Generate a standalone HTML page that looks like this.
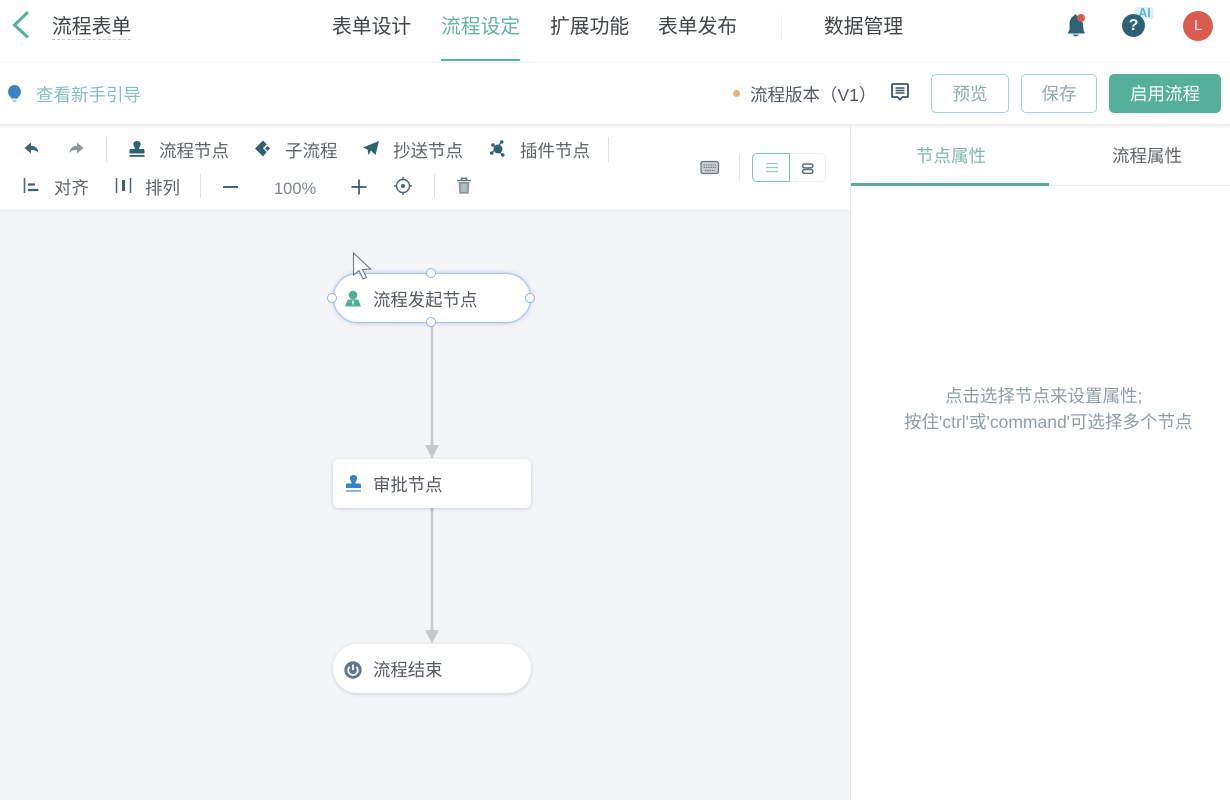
<!DOCTYPE html>
<html lang="zh"><head><meta charset="utf-8"><style>
html,body{margin:0;padding:0;background:#fff}
#p{position:relative;width:1230px;height:800px;overflow:hidden;background:#fff;font-family:"Liberation Sans","Noto Sans CJK SC",sans-serif;color:#555;filter:blur(.3px)}
.t{position:absolute;white-space:nowrap;line-height:26px;font-size:17.5px;color:#5f6469;margin-top:1px}
.n{font-size:19.8px;color:#3f4447}
.a{position:absolute}
svg{position:absolute;overflow:visible}
.v{position:absolute;width:1px;background:#dfe2e4}
.h{position:absolute;width:8px;height:8px;background:#fff;border:1.5px solid #8db4ea;border-radius:50%}
.node{position:absolute;left:333px;width:198px;height:49px;background:#fff;box-shadow:0 1px 4px rgba(40,60,80,.2)}
.btn{position:absolute;top:74px;height:39px;box-sizing:border-box;border:1.5px solid #a4d3d3;border-radius:5px;background:#fff;text-align:center;line-height:39px;font-size:17.5px;color:#8fa9ad}
</style></head><body><div id="p">

<!-- top bar -->
<div class="a" style="left:0;top:62px;width:1230px;height:1px;background:#f1f2f3"></div>
<svg style="left:0;top:0" width="40" height="50"><path d="M28 12 L14.500 25 L28 37.500" fill="none" stroke="#55b09c" stroke-width="3"/></svg>
<div class="t n" style="left:52px;top:13px">流程表单</div>
<div class="a" style="left:52px;top:39px;width:79px;border-top:1px dashed #c6c8ca"></div>
<div class="t n" style="left:332px;top:13px">表单设计</div>
<div class="t n" style="left:441px;top:13px;color:#63b5a3">流程设定</div>
<div class="a" style="left:441px;top:59px;width:79px;height:2px;background:#55b3a1"></div>
<div class="t n" style="left:550px;top:13px">扩展功能</div>
<div class="t n" style="left:658px;top:13px">表单发布</div>
<div class="v" style="left:781px;top:14px;height:25px;background:#eceeef"></div>
<div class="t n" style="left:824px;top:13px">数据管理</div>

<!-- bell -->
<svg style="left:1064px;top:13px" width="24" height="26"><path d="M11 1 L13.500 3 C17 4 19 8 19 12 L19.500 17 L21 20.500 L3.500 20.500 L5.500 17 L5.500 11 C5.500 7 7.500 4 9.500 3Z M9 21.500 C9.500 24 14 24 14.500 21.500Z" fill="#2f6175"/><circle cx="17" cy="5" r="4" fill="#dc5a4c"/></svg>
<!-- help -->
<div class="a" style="left:1135px;top:7px;width:19px;height:12px;background:#dff2fb;border-radius:2px;color:#64b0e8;font-size:12.500px;font-weight:bold;line-height:12px;text-align:center">AI</div>
<div class="a" style="left:1122px;top:14px;width:23px;height:23px;border-radius:50%;background:#2f6175;color:#f2f6f7;font-size:16px;font-weight:bold;line-height:23px;text-align:center">?</div>
<!-- avatar -->
<div class="a" style="left:1183px;top:11px;width:30px;height:30px;border-radius:50%;background:#dc5b50;color:#fff;font-size:14.500px;line-height:30px;text-align:center">L</div>

<!-- sub bar -->
<svg style="left:7px;top:84px" width="16" height="20"><path d="M7.500 1 A6.800 6.800 0 0 1 11.500 13 L10.500 14.500 L4.500 14.500 L3.500 13 A6.800 6.800 0 0 1 7.500 1Z" fill="#3a83c4"/><path d="M5 15.500 H10 L9 18 H6Z" fill="#b4cfe6"/></svg>
<div class="t" style="left:36px;top:81px;color:#83bfbe">查看新手引导</div>
<div class="a" style="left:733px;top:90px;width:7px;height:7px;border-radius:50%;background:#e3b677"></div>
<div class="t" style="left:750px;top:81px;color:#555a60">流程版本（V1）</div>
<svg style="left:890px;top:82px" width="20" height="20"><path d="M3 2 H17 Q18 2 18 3 V15 H12.500 L10 17.500 L7.500 15 H2 V3 Q2 2 3 2Z" fill="none" stroke="#3d5866" stroke-width="1.800" stroke-linejoin="round"/><path d="M5.500 6 H14.500 M5.500 8.500 H14.500 M5.500 11 H14.500" stroke="#3d5866" stroke-width="1.400"/></svg>
<div class="btn" style="left:931px;width:78px">预览</div>
<div class="btn" style="left:1021px;width:76px">保存</div>
<div class="btn" style="left:1109px;width:112px;background:#54b098;border-color:#54b098;color:#fff">启用流程</div>
<div class="a" style="left:0;top:124px;width:1230px;height:5px;background:linear-gradient(#e9eaeb,#fff)"></div>

<!-- canvas -->
<div class="a" style="left:0;top:211px;width:851px;height:589px;background:#f4f5f7"></div>
<div class="a" style="left:0;top:210px;width:851px;height:1px;background:#eceef0"></div>
<div class="a" style="left:850px;top:125px;width:1px;height:675px;background:#e5e7e9"></div>

<!-- toolbar row 1 -->
<svg style="left:22px;top:140px" width="20" height="18"><path d="M2.500 8 L9 2.500 V5.800 C13 5.800 16 8 16.500 13 C14.500 10.500 12.500 10 9 10 V13.500Z" fill="#3a6273"/></svg>
<svg style="left:66px;top:140px" width="20" height="18"><path d="M17.500 8 L11 2.500 V5.800 C7 5.800 4 8 3.500 13 C5.500 10.500 7.500 10 11 10 V13.500Z" fill="#8d9aa3"/></svg>
<div class="v" style="left:106px;top:137px;height:25px"></div>
<svg style="left:128px;top:140px" width="18" height="18"><path d="M9 1 C6 1 5 3 5.500 5 C6 7 7 7.500 7 9 H3 C2 9 1.500 9.500 1.500 10.500 V13.500 H16.500 V10.500 C16.500 9.500 16 9 15 9 H11 C11 7.500 12 7 12.500 5 C13 3 12 1 9 1Z" fill="#2f6175"/><rect x="1.500" y="15" width="15" height="1.800" fill="#2f6175"/></svg>
<div class="t" style="left:159px;top:137px">流程节点</div>
<svg style="left:254px;top:140px" width="18" height="18"><path d="M9 .5 L12.800 4.300 L9 8.100 L12.800 11.900 L9 16.500 L1 8.500Z" fill="#2f6175"/><path d="M13.500 6 L16 8.500 L13.500 11 L11 8.500Z" fill="#2f6175"/></svg>
<div class="t" style="left:285px;top:137px">子流程</div>
<svg style="left:362px;top:140px" width="18" height="18"><path d="M17 1 L13.500 15 L9 10.500 L6.500 15 L5.500 9.500 L1 7.500Z" fill="#2f6175"/></svg>
<div class="t" style="left:393px;top:137px">抄送节点</div>
<svg style="left:488px;top:140px" width="18" height="18"><path d="M5 5 L14.700 15 M13.700 2 L3.700 13" stroke="#2f6175" stroke-width="1.100"/><circle cx="10" cy="9" r="4.500" fill="#2f6175"/><circle cx="5" cy="5" r="1.800" fill="#2f6175"/><circle cx="13.700" cy="2" r="1.800" fill="#2f6175"/><circle cx="3.700" cy="13" r="1.800" fill="#2f6175"/><circle cx="14.700" cy="15" r="1.800" fill="#2f6175"/></svg>
<div class="t" style="left:520px;top:137px">插件节点</div>
<div class="v" style="left:608px;top:137px;height:25px"></div>

<!-- toolbar row 2 -->
<svg style="left:22px;top:177px" width="18" height="18"><path d="M2.500 1 V16" stroke="#4a6470" stroke-width="1.600"/><path d="M6 7.500 H13 M6 13 H16.500" stroke="#3a6273" stroke-width="2.200"/></svg>
<div class="t" style="left:54px;top:174px">对齐</div>
<svg style="left:114px;top:177px" width="18" height="18"><path d="M2.500 1 V16 M16.500 1 V16" stroke="#4a6470" stroke-width="1.500"/><path d="M9.500 3 V14" stroke="#3a6273" stroke-width="3"/></svg>
<div class="t" style="left:145px;top:174px">排列</div>
<div class="v" style="left:200px;top:174px;height:24px"></div>
<div class="a" style="left:223px;top:185.500px;width:15px;height:2px;background:#4a6470"></div>
<div class="t" style="left:274px;top:175px;font-size:16.500px;color:#7e8589">100%</div>
<svg style="left:350px;top:178px" width="18" height="18"><path d="M9 1.500 V16.500 M1.500 9 H16.500" stroke="#3f5a66" stroke-width="1.700"/></svg>
<svg style="left:394px;top:177px" width="18" height="18"><circle cx="9" cy="9" r="6.500" fill="none" stroke="#4a6470" stroke-width="1.400"/><circle cx="9" cy="9" r="2" fill="#4a6470"/><path d="M9 0 V3 M9 15 V18 M0 9 H3 M15 9 H18" stroke="#4a6470" stroke-width="1.400"/></svg>
<div class="v" style="left:434px;top:174px;height:24px"></div>
<svg style="left:456px;top:177px" width="16" height="18"><path d="M1 3.500 H15 M5.500 3 V1.200 H10.500 V3" stroke="#64777f" stroke-width="1.500" fill="none"/><path d="M2.500 5 H13.500 L12.800 15.500 Q12.700 16.800 11.500 16.800 H4.500 Q3.300 16.800 3.200 15.500Z" fill="#8d9ca2"/><path d="M6 7 V15 M8 7 V15 M10 7 V15" stroke="#e6eaeb" stroke-width=".8"/></svg>

<!-- keyboard & view toggle -->
<svg style="left:700px;top:160px" width="20" height="16"><rect x="1" y="1.500" width="17.500" height="12" rx="2" fill="#c8cdd0" stroke="#6b7780" stroke-width="1.300"/><path d="M3.500 5 H16 M3.500 7.500 H16 M5 10.500 H14.500" stroke="#6b7780" stroke-width="1.100" stroke-dasharray="1.500 .8"/></svg>
<div class="v" style="left:739px;top:155px;height:25px"></div>
<div class="a" style="left:752px;top:153px;width:74px;height:29px;box-sizing:border-box;border:1.500px solid #eceef0;border-radius:5px;background:#fff"></div>
<div class="a" style="left:752px;top:153px;width:38px;height:29px;box-sizing:border-box;border:1.500px solid #78c5b8;border-radius:5px 0 0 5px;background:#fff"></div>
<svg style="left:765px;top:162px" width="14" height="12"><path d="M1 1.500 H13 M1 5.500 H13 M1 9.500 H13" stroke="#8fcfc2" stroke-width="1.300"/></svg>
<svg style="left:801px;top:163px" width="14" height="12"><rect x="1.500" y="1" width="10.500" height="3.800" rx="1.900" fill="none" stroke="#5e6b73" stroke-width="1.400"/><rect x="1.500" y="6.500" width="10.500" height="3.800" rx="1.900" fill="none" stroke="#5e6b73" stroke-width="1.400"/></svg>

<!-- right panel -->
<div class="t" style="left:916px;top:142px;color:#7fb7ae">节点属性</div>
<div class="t" style="left:1112px;top:142px;color:#5f6469">流程属性</div>
<div class="a" style="left:851px;top:185px;width:379px;height:1px;background:#eceeef"></div>
<div class="a" style="left:851px;top:183px;width:198px;height:3px;background:#55b097"></div>
<div class="t" style="left:945px;top:382px;color:#8f9ea5">点击选择节点来设置属性;</div>
<div class="t" style="left:904px;top:408px;color:#8f9ea5">按住'ctrl'或'command'可选择多个节点</div>

<!-- edges -->
<svg style="left:0;top:0" width="1230" height="800"><path d="M432 323 V447 M432 508 V632" stroke="#c8cbce" stroke-width="2.600"/><path d="M425 445 H439 L432 458.500Z M425 630 H439 L432 643.500Z" fill="#c4c9cd"/></svg>

<!-- start node -->
<div class="node" style="top:273px;height:50px;box-sizing:border-box;border:1.500px solid #a6c5f0;border-radius:25px;box-shadow:0 0 4px rgba(100,150,220,.5)"></div>
<svg style="left:345px;top:290px" width="18" height="18"><circle cx="8" cy="5" r="4.300" fill="#4fae95"/><path d="M0 16.500 L2.500 10 C4.500 9 11.500 9 13.500 10 L16 16.500Z" fill="#4fae95"/><path d="M8 10.500 V14.500" stroke="#fff" stroke-width="1.300"/></svg>
<div class="t" style="left:373px;top:286px;font-size:17.400px;color:#555a60">流程发起节点</div>
<div class="h" style="left:426.200px;top:267.800px"></div>
<div class="h" style="left:426.200px;top:317.200px"></div>
<div class="h" style="left:327.200px;top:292.500px"></div>
<div class="h" style="left:525.200px;top:292.500px"></div>

<!-- approve node -->
<div class="node" style="top:459px;border-radius:6px"></div>
<svg style="left:345px;top:475px" width="18" height="18"><path d="M8.500 0 C5.500 0 4.500 2 5 4 C5.500 6 6.500 6.500 6.500 8.500 H2.500 C1.500 8.500 1 9 1 10 V13 H16 V10 C16 9 15.500 8.500 14.500 8.500 H10.500 C10.500 6.500 11.500 6 12 4 C12.500 2 11.500 0 8.500 0Z" fill="#3a83c4"/><rect x="1" y="15" width="15" height="2" fill="#8db8dd"/></svg>
<div class="t" style="left:373px;top:471px;font-size:17.400px;color:#555a60">审批节点</div>

<!-- end node -->
<div class="node" style="top:644px;border-radius:25px"></div>
<svg style="left:344px;top:660.500px" width="18" height="18"><circle cx="9" cy="9" r="8.700" fill="#5f7a90"/><path d="M5.600 5.800 A4.800 4.800 0 1 0 12.400 5.800" fill="none" stroke="#fff" stroke-width="1.700"/><path d="M9 3.500 V9" stroke="#fff" stroke-width="1.700"/></svg>
<div class="t" style="left:373px;top:656px;font-size:17.400px;color:#555a60">流程结束</div>

<!-- cursor -->
<svg style="left:352px;top:252px" width="22" height="30"><path d="M1.500 1 V23 L7 18.500 L11 27 L14.500 25.500 L10.500 17.500 L18.500 17Z" fill="#fff" stroke="#6f777c" stroke-width="1.100"/></svg>

</div></body></html>
